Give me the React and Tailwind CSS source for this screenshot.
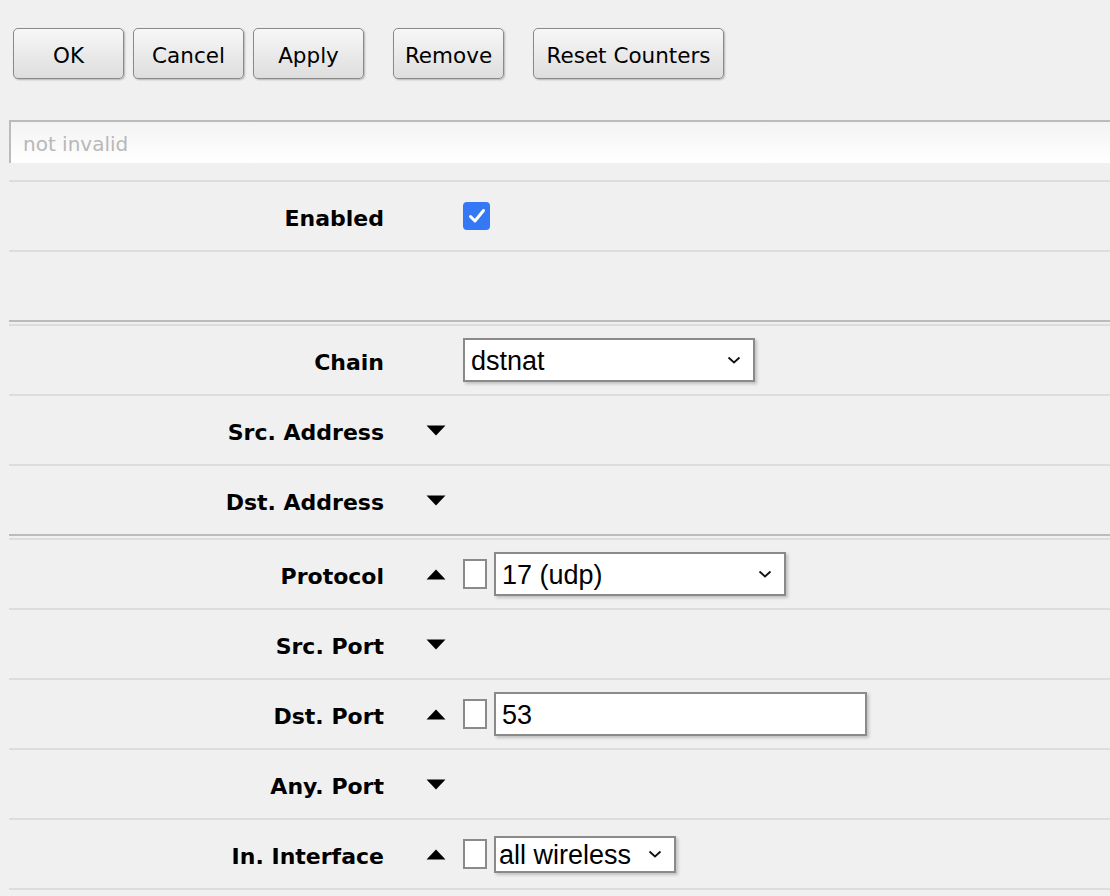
import React from 'react';

const Btn = ({ children, className = '' }) => (
  <button
    className={`h-[51px] rounded-[5px] border border-[#8a8a8a] bg-gradient-to-b from-[#f7f7f7] to-[#dedede] pt-[5px] text-[21.5px] text-black shadow-[1px_1px_2px_rgba(0,0,0,0.25)] ${className}`}
  >
    {children}
  </button>
);

const Chevron = () => (
  <svg width="14" height="8" viewBox="0 0 14 8" className="shrink-0">
    <polyline points="1.5,1.5 7,6.5 12.5,1.5" fill="none" stroke="#111" strokeWidth="1.8" />
  </svg>
);

const Arrow = ({ up }) => (
  <svg width="20" height="11" viewBox="0 0 20 11" className="shrink-0">
    {up ? <polygon points="10,0.5 19.5,10.5 0.5,10.5" fill="#000" /> : <polygon points="0.5,0.5 19.5,0.5 10,10.5" fill="#000" />}
  </svg>
);

const SmallBox = () => <div className="h-[30px] w-[24px] shrink-0 border-2 border-[#8a8a8a] bg-white" />;

const Select = ({ value, w, h = 'h-[44px]', pl = 'pl-[6px]' }) => (
  <div
    className={`${w} ${h} ${pl} flex items-center justify-between border-2 border-[#8a8a8a] bg-white pr-[12px] shadow-[2px_2px_3px_rgba(0,0,0,0.2)] font-['Liberation_Sans',Arial,sans-serif] text-[27px] text-black`}
  >
    <span className="pt-[2px]">{value}</span>
    <Chevron />
  </div>
);

const Row = ({ label, arrow, children, last }) => (
  <div className={`flex h-[70px] items-center border-b-2 ${last ? 'border-[#bbbbbb]' : 'border-[#dddddd]'}`}>
    <div className="w-[375px] pt-[5px] text-right text-[22px] font-bold text-black">{label}</div>
    <div className="ml-[42px] flex items-center">
      <div className="w-[37px]">{arrow && <Arrow up={arrow === 'up'} />}</div>
      <div className="flex items-center gap-[7px]">{children}</div>
    </div>
  </div>
);

export default function App() {
  return (
    <div className="min-h-[896px] w-[1110px] bg-[#f0f0f0] font-['DejaVu_Sans',Verdana,sans-serif]">
      <div className="flex pl-[13px] pt-[28px]">
        <Btn className="w-[111px]">OK</Btn>
        <Btn className="ml-[9px] w-[111px]">Cancel</Btn>
        <Btn className="ml-[9px] w-[111px]">Apply</Btn>
        <Btn className="ml-[29px] w-[111px]">Remove</Btn>
        <Btn className="ml-[29px] w-[191px]">Reset Counters</Btn>
      </div>

      <div className="ml-[9px]">
        <div className="mt-[41px] flex h-[43px] items-center border-l-2 border-t-2 border-[#bbbbbb] bg-gradient-to-b from-[#f3f3f3] to-white pl-[12px] pt-[2px] text-[20px] text-[#b8b8b8]">
          not invalid
        </div>

        <div className="mt-[17px] border-t-2 border-[#dddddd]">
          <Row label="Enabled">
            <div className="flex h-[28px] w-[27px] items-center justify-center rounded-[4px] bg-[#3478f6]">
              <svg width="18" height="16" viewBox="0 0 18 16">
                <polyline points="2.5,8.5 7,13 15.5,2.5" fill="none" stroke="#fff" strokeWidth="3" strokeLinecap="round" strokeLinejoin="round" />
              </svg>
            </div>
          </Row>
          <div className="h-[70px] border-b-2 border-[#bbbbbb]" />
        </div>

        <div className="mt-[2px] border-t-2 border-[#dddddd]">
          <Row label="Chain">
            <Select value="dstnat" w="w-[292px]" />
          </Row>
          <Row label="Src. Address" arrow="down" />
          <Row label="Dst. Address" arrow="down" last />
        </div>

        <div className="mt-[2px] border-t-2 border-[#dddddd]">
          <Row label="Protocol" arrow="up">
            <SmallBox />
            <Select value="17 (udp)" w="w-[292px]" />
          </Row>
          <Row label="Src. Port" arrow="down" />
          <Row label="Dst. Port" arrow="up">
            <SmallBox />
            <div className="flex h-[44px] w-[373px] items-center border-2 border-[#8a8a8a] bg-white pl-[6px] font-['Liberation_Sans',Arial,sans-serif] text-[27px] text-black shadow-[2px_2px_3px_rgba(0,0,0,0.2)]">
              <span className="pt-[2px]">53</span>
            </div>
          </Row>
          <Row label="Any. Port" arrow="down" />
          <Row label="In. Interface" arrow="up">
            <SmallBox />
            <Select value="all wireless" w="w-[182px]" h="h-[37px]" pl="pl-[3px]" />
          </Row>
        </div>
      </div>
    </div>
  );
}
